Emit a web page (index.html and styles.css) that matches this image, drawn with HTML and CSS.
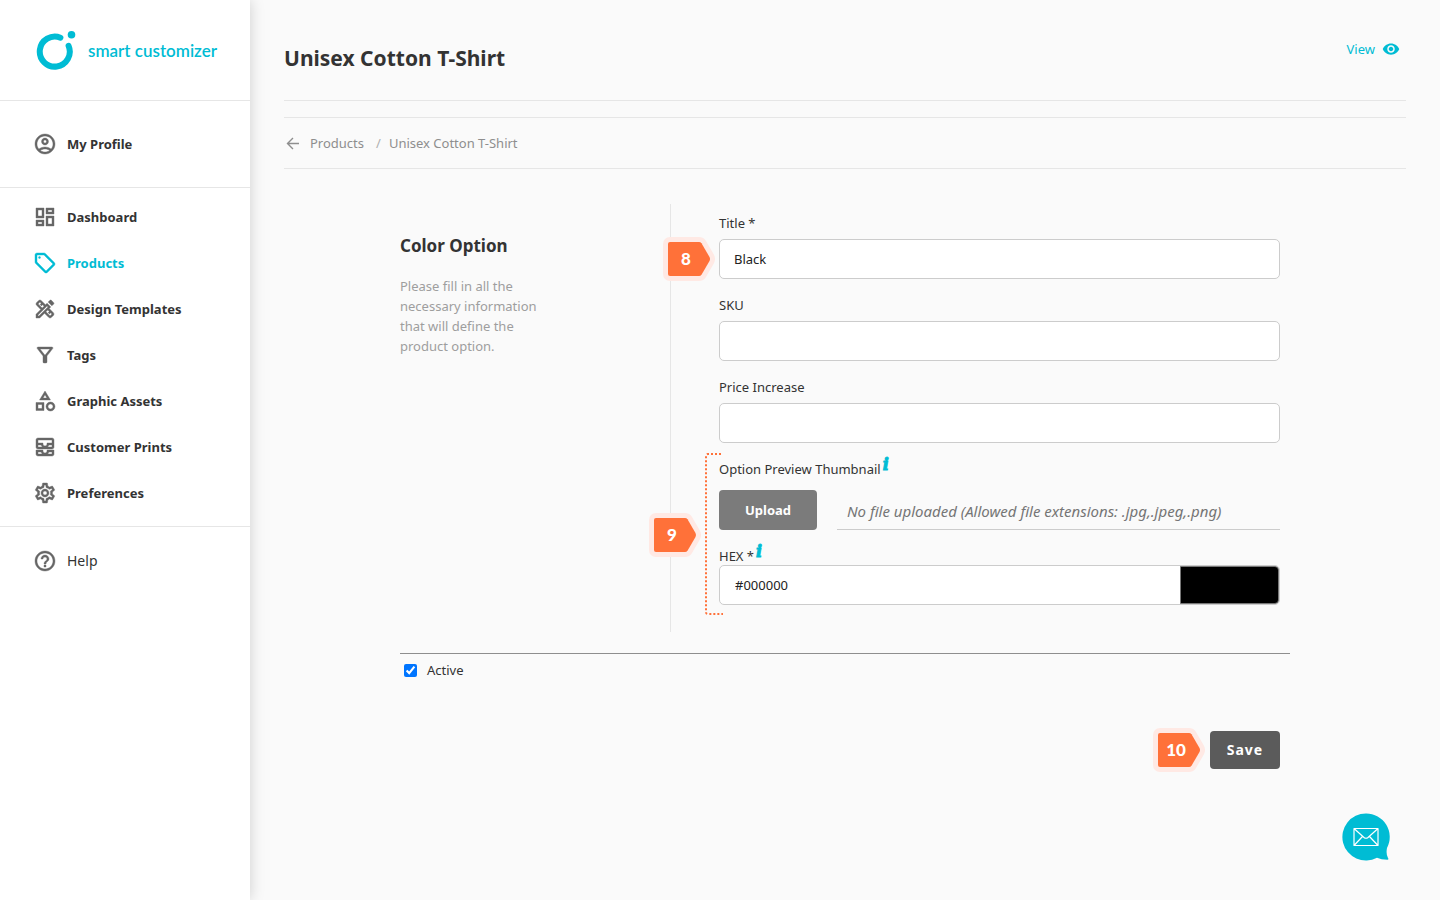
FILE: index.html
```html
<!DOCTYPE html>
<html lang="en">
<head>
<meta charset="utf-8">
<meta name="viewport" content="width=device-width, initial-scale=1">
<title>Unisex Cotton T-Shirt – smart customizer</title>
<link rel="stylesheet" href="styles.css">
</head>
<body>
<div class="app">
  <aside class="sidebar">
    <a class="brand" href="#">
      <svg class="brand-mark" viewBox="0 0 40 40" aria-hidden="true">
        <path d="M24.400 7.700A15 15 0 1 0 32.600 15.800" fill="none" stroke="#00bcd4" stroke-width="6" stroke-linecap="round"/>
        <circle cx="35.500" cy="4.800" r="3.800" fill="#00bcd4"/>
      </svg>
      <span class="brand-name">smart customizer</span>
    </a>
    <nav class="nav">
      <div class="nav-group nav-profile">
        <a class="nav-item" href="#"><svg class="icon" viewBox="0 0 24 24" aria-hidden="true"><path d="M12 2C6.480 2 2 6.480 2 12s4.480 10 10 10 10-4.480 10-10S17.520 2 12 2zM7.350 18.500C8.660 17.560 10.260 17 12 17s3.340.56 4.650 1.500C15.340 19.440 13.740 20 12 20s-3.340-.56-4.650-1.500zm10.790-1.380C16.450 15.800 14.320 15 12 15s-4.450.8-6.140 2.120C4.700 15.730 4 13.950 4 12c0-4.420 3.580-8 8-8s8 3.580 8 8c0 1.950-.7 3.730-1.860 5.120zM12 6c-1.930 0-3.500 1.570-3.500 3.500S10.070 13 12 13s3.500-1.570 3.500-3.500S13.930 6 12 6zm0 5c-.83 0-1.500-.67-1.500-1.500S11.170 8 12 8s1.500.67 1.500 1.500S12.830 11 12 11z"/></svg>My Profile</a>
      </div>
      <div class="nav-group nav-main">
        <a class="nav-item" href="#"><svg class="icon" viewBox="0 0 24 24" aria-hidden="true"><path d="M19 5v2h-4V5h4M9 5v6H5V5h4m10 8v6h-4v-6h4M9 17v2H5v-2h4M21 3h-8v6h8V3zM11 3H3v10h8V3zm10 8h-8v10h8V11zm-10 4H3v6h8v-6z"/></svg>Dashboard</a>
        <a class="nav-item nav-active" href="#" aria-current="page"><svg class="icon" viewBox="0 0 24 24" aria-hidden="true"><path d="M21.410 11.580l-9-9C12.050 2.220 11.550 2 11 2H4c-1.100 0-2 .9-2 2v7c0 .55.22 1.050.59 1.420l9 9c.36.36.86.58 1.410.58s1.050-.22 1.410-.59l7-7c.37-.36.59-.86.59-1.410s-.23-1.060-.59-1.420zM13 20.010L4 11V4h7v-.01l9 9-7 7.020z"/><circle cx="6.500" cy="6.500" r="1"/></svg>Products</a>
        <a class="nav-item" href="#"><svg class="icon" viewBox="0 0 24 24" aria-hidden="true"><path fill-rule="evenodd" d="M16.240 11.510l1.570-1.570-3.750-3.750-1.570 1.570L8.350 3.630c-.78-.78-2.050-.78-2.830 0l-1.900 1.900c-.78.78-.78 2.050 0 2.830l4.130 4.130L3 17.250V21h3.750l4.760-4.760 4.130 4.130c.95.95 2.230.6 2.830 0l1.900-1.900c.78-.78.78-2.050 0-2.830l-4.130-4.130zm-7.060-.44L5.040 6.940l1.890-1.900L8.200 6.310 7.020 7.500l1.410 1.410 1.190-1.190 1.450 1.450-1.890 1.900zm7.880 7.890l-4.130-4.130 1.900-1.900 1.450 1.450-1.190 1.190 1.410 1.410 1.190-1.190 1.270 1.270-1.910 1.900zM20.710 7.040c.39-.39.39-1.020 0-1.410l-2.340-2.340c-.47-.47-1.120-.29-1.410 0l-1.830 1.830 3.750 3.750 1.830-1.830zM5.920 19H5v-.92l9.060-9.060.92.92L5.920 19z"/></svg>Design Templates</a>
        <a class="nav-item" href="#"><svg class="icon" viewBox="0 0 24 24" aria-hidden="true"><path d="M7 6h10l-5.010 6.300L7 6zm-2.750-.39C6.270 8.200 10 13 10 13v6c0 .55.45 1 1 1h2c.55 0 1-.45 1-1v-6s3.720-4.800 5.740-7.390c.51-.66.04-1.610-.79-1.610H5.040c-.83 0-1.300.95-.79 1.610z"/></svg>Tags</a>
        <a class="nav-item" href="#"><svg class="icon" viewBox="0 0 24 24" aria-hidden="true"><path d="M12 2l-5.500 9h11L12 2zm0 3.840L13.930 9h-3.870L12 5.840zM17.500 13c-2.490 0-4.500 2.010-4.500 4.500s2.010 4.500 4.500 4.500 4.500-2.010 4.500-4.500-2.010-4.500-4.500-4.500zm0 7c-1.380 0-2.500-1.120-2.500-2.500s1.120-2.500 2.500-2.500 2.500 1.120 2.500 2.500-1.120 2.500-2.500 2.500zM3 21.500h8v-8H3v8zm2-6h4v4H5v-4z"/></svg>Graphic Assets</a>
        <a class="nav-item" href="#"><svg class="icon" viewBox="0 0 24 24" aria-hidden="true"><path d="M19 3H5c-1.100 0-2 .9-2 2v7c0 1.100.9 2 2 2h14c1.100 0 2-.9 2-2V5c0-1.100-.9-2-2-2zM5 10h3.130c.21.78.67 1.470 1.270 2H5v-2zm14 2h-4.400c.6-.53 1.060-1.220 1.270-2H19v2zm0-4h-5v1c0 1.070-.93 2-2 2s-2-.93-2-2V8H5V5h14v3zm-5 7v1c0 .47-.19.9-.48 1.250-.37.45-.92.75-1.520.75s-1.150-.3-1.520-.75c-.29-.35-.48-.78-.48-1.250v-1H3v4c0 1.100.9 2 2 2h14c1.100 0 2-.9 2-2v-4h-7zm-9 2h3.130c.02.09.06.17.09.25.24.68.65 1.280 1.180 1.750H5v-2zm14 2h-4.400c.54-.47.95-1.070 1.180-1.750.03-.08.07-.17.09-.25H19v2z"/></svg>Customer Prints</a>
        <a class="nav-item" href="#"><svg class="icon" viewBox="0 0 24 24" aria-hidden="true"><path d="M19.430 12.980c.04-.32.07-.64.07-.98 0-.34-.03-.66-.07-.98l2.110-1.650c.19-.15.24-.42.12-.64l-2-3.460c-.09-.16-.26-.25-.44-.25-.06 0-.12.01-.17.03l-2.490 1c-.52-.4-1.080-.73-1.690-.98l-.38-2.650C14.460 2.180 14.250 2 14 2h-4c-.25 0-.46.18-.49.42l-.38 2.650c-.61.25-1.170.59-1.690.98l-2.490-1c-.06-.02-.12-.03-.18-.03-.17 0-.34.09-.43.25l-2 3.460c-.13.22-.07.49.12.64l2.110 1.650c-.04.32-.07.65-.07.98 0 .33.03.66.07.98l-2.110 1.650c-.19.15-.24.42-.12.64l2 3.460c.09.16.26.25.44.25.06 0 .12-.01.17-.03l2.490-1c.52.4 1.080.73 1.690.98l.38 2.650c.03.24.24.42.49.42h4c.25 0 .46-.18.49-.42l.38-2.650c.61-.25 1.170-.59 1.690-.98l2.490 1c.06.02.12.03.18.03.17 0 .34-.09.43-.25l2-3.460c.12-.22.07-.49-.12-.64l-2.110-1.650zm-1.980-1.710c.04.31.05.52.05.73 0 .21-.02.43-.05.73l-.14 1.130.89.7 1.080.84-.7 1.210-1.270-.51-1.040-.42-.9.68c-.43.32-.84.56-1.250.73l-1.060.43-.16 1.130-.2 1.350h-1.400l-.19-1.350-.16-1.130-1.060-.43c-.43-.18-.83-.41-1.230-.71l-.91-.7-1.060.43-1.270.51-.7-1.210 1.080-.84.89-.7-.14-1.130c-.03-.31-.05-.54-.05-.74s.02-.43.05-.73l.14-1.130-.89-.7-1.080-.84.7-1.210 1.270.51 1.040.42.9-.68c.43-.32.84-.56 1.250-.73l1.060-.43.16-1.130.2-1.350h1.390l.19 1.350.16 1.130 1.060.43c.43.18.83.41 1.230.71l.91.7 1.060-.43 1.270-.51.7 1.210-1.070.85-.89.7.14 1.130zM12 8c-2.210 0-4 1.790-4 4s1.790 4 4 4 4-1.790 4-4-1.790-4-4-4zm0 6c-1.100 0-2-.9-2-2s.9-2 2-2 2 .9 2 2-.9 2-2 2z"/></svg>Preferences</a>
      </div>
      <div class="nav-group nav-help">
        <a class="nav-item nav-light" href="#"><svg class="icon" viewBox="0 0 24 24" aria-hidden="true"><path d="M11 18h2v-2h-2v2zm1-16C6.480 2 2 6.480 2 12s4.480 10 10 10 10-4.480 10-10S17.520 2 12 2zm0 18c-4.410 0-8-3.590-8-8s3.590-8 8-8 8 3.590 8 8-3.590 8-8 8zm0-14c-2.210 0-4 1.790-4 4h2c0-1.100.9-2 2-2s2 .9 2 2c0 2-3 1.750-3 5h2c0-2.250 3-2.500 3-5 0-2.210-1.790-4-4-4z"/></svg>Help</a>
      </div>
    </nav>
  </aside>

  <main class="main">
    <header class="page-head">
      <h1 class="page-title">Unisex Cotton T-Shirt</h1>
      <a class="view-link" href="#">View
        <svg class="eye" viewBox="0 0 24 24" aria-hidden="true"><path d="M12 4.500C7 4.500 2.730 7.610 1 12c1.730 4.390 6 7.500 11 7.500s9.270-3.110 11-7.500c-1.730-4.390-6-7.500-11-7.500zM12 17c-2.760 0-5-2.240-5-5s2.240-5 5-5 5 2.240 5 5-2.240 5-5 5zm0-8c-1.660 0-3 1.340-3 3s1.340 3 3 3 3-1.340 3-3-1.340-3-3-3z"/></svg>
      </a>
    </header>
    <nav class="crumbs" aria-label="Breadcrumb">
      <svg class="back" viewBox="0 0 14 14" aria-hidden="true"><path d="M13 7.500H2M7 2L1.500 7.500 7 13" fill="none" stroke="#8e8e8e" stroke-width="1.400"/></svg>
      <a class="crumb" href="#">Products</a>
      <span class="crumb-sep">/</span>
      <span class="crumb">Unisex Cotton T-Shirt</span>
    </nav>

    <form class="form">
      <div class="form-body">
        <section class="intro">
          <h2 class="intro-title">Color Option</h2>
          <p class="intro-text">Please fill in all the necessary information that will define the product option.</p>
        </section>
        <div class="fields">
          <div class="field">
            <label class="label" for="title">Title *</label>
            <input class="input" id="title" type="text" value="Black">
            <span class="marker marker-title"><svg class="marker-shape" viewBox="0 0 54 44" aria-hidden="true"><use href="#tag-shape"/></svg><span class="marker-num">8</span></span>
          </div>
          <div class="field">
            <label class="label" for="sku">SKU</label>
            <input class="input" id="sku" type="text">
          </div>
          <div class="field">
            <label class="label" for="price">Price Increase</label>
            <input class="input" id="price" type="text">
          </div>
          <div class="media">
            <div class="label-row"><span class="label" id="thumb-label">Option Preview Thumbnail</span><i class="info">i</i></div>
            <div class="upload-row">
              <button class="upload" type="button" aria-describedby="thumb-label">Upload</button>
              <span class="file-note">No file uploaded (Allowed file extensions: .jpg,.jpeg,.png)</span>
            </div>
            <div class="label-row label-hex"><label class="label" for="hex">HEX *</label><i class="info">i</i></div>
            <div class="color-row">
              <input class="hex" id="hex" type="text" value="#000000">
              <input class="swatch" type="color" value="#000000" aria-label="Pick colour">
            </div>
            <svg class="bracket" viewBox="0 0 20 164" aria-hidden="true"><path d="M18 2H5Q3 2 3 4V160Q3 162 5 162H20" fill="none" stroke="#ff7139" stroke-width="2" stroke-dasharray="2 2"/></svg>
            <span class="marker marker-media"><svg class="marker-shape" viewBox="0 0 54 44" aria-hidden="true"><use href="#tag-shape"/></svg><span class="marker-num">9</span></span>
          </div>
        </div>
      </div>
      <div class="status">
        <input class="check" id="active" type="checkbox" checked>
        <label class="label" for="active">Active</label>
      </div>
      <div class="actions">
        <div class="save-wrap">
          <button class="save" type="submit">Save</button>
          <span class="marker marker-save"><svg class="marker-shape" viewBox="0 0 54 44" aria-hidden="true"><use href="#tag-shape"/></svg><span class="marker-num">10</span></span>
        </div>
      </div>
    </form>
  </main>
</div>

<button class="chat" type="button" aria-label="Contact us">
  <svg class="chat-icon" viewBox="0 0 48 48" aria-hidden="true">
    <path d="M24 .5A23.500 23.500 0 1 0 35 44.700Q39 46.500 45.500 46.800Q47 46.500 46 45Q43.800 41 45 35A23.500 23.500 0 0 0 24 .5Z" fill="#00bcd4"/>
    <path d="M12 15.500H36V32.500H12ZM12 15.500L22 24.500Q24 26 26 24.500L36 15.500M12 32.500L20.500 23.500M36 32.500L27.500 23.500" fill="none" stroke="#fff" stroke-width="1.200" stroke-linejoin="round"/>
  </svg>
</button>

<svg class="defs" width="0" height="0" aria-hidden="true">
  <defs>
    <g id="tag-shape">
      <path d="M7 5H36Q37.500 5 38.500 6.300L46.500 20Q47.500 22 46.500 24L38.500 37.700Q37.500 39 36 39H7Q5 39 5 37V7Q5 5 7 5Z" fill="#ffe9e4" stroke="#ffe9e4" stroke-width="10" stroke-linejoin="round"/>
      <path d="M7 5H36Q37.500 5 38.500 6.300L46.500 20Q47.500 22 46.500 24L38.500 37.700Q37.500 39 36 39H7Q5 39 5 37V7Q5 5 7 5Z" fill="#ff7139"/>
    </g>
  </defs>
</svg>
</body>
</html>
```

FILE: styles.css
```css
* {
  box-sizing: border-box;
}

body {
  margin: 0;
  background: #fafafa;
  color: #333;
  font: 13px/20px "Noto Sans", sans-serif;
}

a {
  color: inherit;
  text-decoration: none;
}

h1,
h2,
p {
  margin: 0;
}

button,
input {
  font: inherit;
  color: inherit;
}

.defs {
  position: absolute;
}

.app {
  display: flex;
  min-height: 100vh;
}

/* Sidebar */

.sidebar {
  flex: 0 0 250px;
  background: #fff;
  box-shadow: 0 0 14px rgba(0, 0, 0, 0.18);
}

.brand {
  display: flex;
  align-items: center;
  gap: 12px;
  height: 101px;
  padding-left: 36px;
  border-bottom: 1px solid #e6e6e6;
  color: #00bcd4;
}

.brand-mark {
  width: 40px;
  height: 40px;
}

.brand-name {
  padding-top: 2px;
  font: 600 17px/24px Lato, sans-serif;
}

.nav-group {
  display: flex;
  flex-direction: column;
}

.nav-profile {
  padding: 20px 0;
  border-bottom: 1px solid #e6e6e6;
}

.nav-main {
  padding: 6px 0 10px;
  border-bottom: 1px solid #e6e6e6;
}

.nav-help {
  padding: 11px 0;
}

.nav-item {
  display: flex;
  align-items: center;
  gap: 10px;
  height: 46px;
  padding-left: 33px;
  font-weight: 700;
}

.nav-active {
  color: #00bcd4;
}

.nav-light {
  font-size: 14px;
  font-weight: 400;
}

.icon {
  width: 24px;
  height: 24px;
  fill: #666;
  stroke: #666;
  stroke-width: 0.4px;
}

.nav-active .icon {
  fill: #00bcd4;
  stroke: #00bcd4;
}

/* Page header */

.main {
  flex: 1;
  min-width: 0;
  padding: 0 34px;
}

.page-head {
  display: flex;
  align-items: center;
  justify-content: space-between;
  height: 101px;
  padding: 16px 6px 0 0;
  border-bottom: 1px solid #e6e6e6;
}

.page-title {
  font-size: 21px;
  line-height: 32px;
  font-weight: 700;
}

.view-link {
  display: flex;
  align-self: flex-start;
  align-items: center;
  gap: 7px;
  padding-top: 23px;
  color: #00bcd4;
}

.eye {
  width: 18px;
  height: 18px;
  fill: #00bcd4;
}

.crumbs {
  display: flex;
  align-items: center;
  height: 52px;
  margin-top: 16px;
  padding-left: 2px;
  border: solid #e6e6e6;
  border-width: 1px 0;
  color: #8e8e8e;
}

.back {
  width: 14px;
  height: 14px;
  margin-right: 10px;
}

.crumb-sep {
  margin: 0 8px 0 12px;
  color: #b0b0b0;
}

/* Form */

.form {
  max-width: 890px;
  margin: 35px auto 0;
}

.form-body {
  display: flex;
}

.intro {
  flex: 0 0 271px;
  padding: 28px 120px 0 0;
  border-right: 1px solid #e6e6e6;
}

.intro-title {
  font-size: 17px;
  line-height: 28px;
}

.intro-text {
  margin-top: 16px;
  color: #9e9e9e;
}

.fields {
  flex: 1;
  min-width: 0;
  display: flex;
  flex-direction: column;
  gap: 16px;
  padding: 9px 10px 27px 48px;
}

.field,
.media {
  position: relative;
  display: flex;
  flex-direction: column;
}

.field {
  gap: 6px;
}

.input,
.color-row {
  width: 100%;
  height: 40px;
  border: 1px solid #ccc;
  border-radius: 5px;
  background: #fff;
  color: #222;
}

.input {
  padding: 0 14px;
}

.label-row {
  display: flex;
  gap: 2px;
}

.label-hex {
  height: 19px;
  margin-top: 16px;
}

.info {
  color: #00bcd4;
  font: italic 700 16px/12px "DejaVu Serif", serif;
  -webkit-text-stroke: 1px #00bcd4;
}

.upload-row {
  display: flex;
  gap: 20px;
  margin-top: 11px;
}

.upload {
  width: 98px;
  height: 40px;
  padding: 0;
  border: 0;
  border-radius: 4px;
  background: #7b7b7b;
  color: #fff;
  font-weight: 700;
}

.file-note {
  flex: 1;
  padding: 11px 10px 8px;
  border-bottom: 1px solid #ccc;
  color: #757575;
  font-size: 15px;
  font-style: italic;
}

.color-row {
  display: flex;
  overflow: hidden;
}

.hex {
  flex: 1;
  min-width: 0;
  padding: 0 15px;
  border: 0;
  background: none;
}

.swatch {
  width: 99px;
  height: 38px;
  padding: 0;
  border: 0;
  background: none;
}

.swatch::-webkit-color-swatch-wrapper {
  padding: 0;
}

.swatch::-webkit-color-swatch {
  border: 1px solid #777;
  border-radius: 0 4px 4px 0;
}

.status {
  display: flex;
  align-items: center;
  gap: 10px;
  margin-top: 21px;
  padding: 6px 4px 0;
  border-top: 1px solid #8e8e8e;
}

.check {
  width: 13px;
  height: 13px;
  margin: 0;
  accent-color: #0075ff;
}

.actions {
  display: flex;
  justify-content: flex-end;
  padding: 51px 10px 40px;
}

.save-wrap {
  position: relative;
}

.save {
  display: block;
  width: 70px;
  height: 38px;
  padding: 0;
  border: 0;
  border-radius: 4px;
  background: #5b5b5b;
  color: #fff;
  font-size: 14px;
  font-weight: 700;
  letter-spacing: 1px;
}

/* Numbered step markers laid over the form */

.marker {
  position: absolute;
  width: 54px;
  height: 44px;
}

.marker-shape {
  display: block;
  width: 54px;
  height: 44px;
}

.marker-num {
  position: absolute;
  inset: 0 13px 0 5px;
  color: #fff;
  font: 900 17px/44px Lato, sans-serif;
  text-align: center;
}

.marker-title {
  left: -56px;
  top: 24px;
}

.marker-media {
  left: -70px;
  top: 54px;
}

.marker-save {
  left: -57px;
  top: -3px;
}

.bracket {
  position: absolute;
  left: -16px;
  top: -7px;
  width: 20px;
  height: 164px;
}

.chat {
  position: fixed;
  right: 50px;
  bottom: 39px;
  width: 48px;
  height: 48px;
  padding: 0;
  border: 0;
  background: none;
}

.chat-icon {
  display: block;
  width: 48px;
  height: 48px;
}
```
